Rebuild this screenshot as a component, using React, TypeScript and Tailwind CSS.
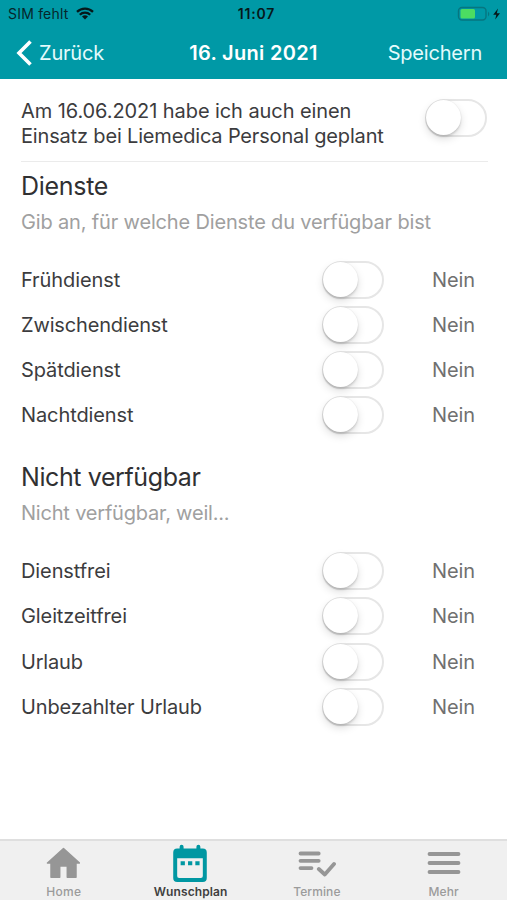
import type { ReactNode } from "react";

function Toggle() {
  return (
    <span className="flex h-[38px] w-[62px] shrink-0 rounded-full border-2 border-[#e6e6e6] bg-white">
      <span className="-mt-px -ml-px h-[35px] w-[35px] rounded-full bg-white shadow-[0_4px_8px_rgba(0,0,0,0.13),0_2px_2px_rgba(0,0,0,0.12),0_0_1px_rgba(0,0,0,0.12)]" />
    </span>
  );
}

function ShiftRow({ label, spacing }: { label: string; spacing: string }) {
  return (
    <div className="flex h-[45.2px] items-center pr-[32px] pl-[21px]">
      <span className={`flex-1 text-[20px] leading-[24px] text-[#3c3c3e] ${spacing}`}>{label}</span>
      <Toggle />
      <span className="w-[91px] text-right text-[20px] leading-[24px] tracking-[-0.1px] text-[#707070]">Nein</span>
    </div>
  );
}

function Tab({ label, active, className, children }: { label: string; active?: boolean; className: string; children: ReactNode }) {
  return (
    <div className="flex flex-1 flex-col items-center">
      <div className="flex h-[44px] items-center justify-center">{children}</div>
      <span className={`text-[12px] leading-[14px] whitespace-nowrap ${active ? "font-semibold text-[#3f3f3f]" : "font-medium text-[#9b9b9b]"} ${className}`}>{label}</span>
    </div>
  );
}

const shifts = [
  { label: "Frühdienst", spacing: "tracking-[-0.1px]" },
  { label: "Zwischendienst", spacing: "tracking-[-0.15px]" },
  { label: "Spätdienst", spacing: "tracking-[-0.1px]" },
  { label: "Nachtdienst", spacing: "tracking-[-0.1px]" },
];

const absences = [
  { label: "Dienstfrei", spacing: "tracking-[-0.1px]" },
  { label: "Gleitzeitfrei", spacing: "tracking-[-0.1px]" },
  { label: "Urlaub", spacing: "tracking-[-0.2px]" },
  { label: "Unbezahlter Urlaub", spacing: "tracking-[-0.15px]" },
];

export default function App() {
  return (
    <div className="flex h-[900px] w-[507px] flex-col overflow-hidden bg-white font-['Inter',sans-serif]">
      <header className="h-[79px] shrink-0 bg-[#0099a6]">
        <div className="grid h-[27px] grid-cols-[1fr_auto_1fr] items-center pr-[6px] pl-[8px] text-[14px] leading-[18px] text-[#06262a]">
          <div className="flex items-center gap-[7px]">
            <span className="tracking-[0.2px] whitespace-nowrap">SIM fehlt</span>
            <svg width="18" height="13" viewBox="0 0 18 13" fill="none" stroke="#06181a" strokeWidth="2.3">
              <path d="M1 4.9a11.4 11.4 0 0 1 16 0" />
              <path d="M3.8 7.8a7.4 7.4 0 0 1 10.4 0" />
              <path d="M9 12.6 6 9.6a4.3 4.3 0 0 1 6 0Z" fill="#06181a" stroke="none" />
            </svg>
          </div>
          <span className="pl-[4px] text-center font-semibold tracking-[0.8px] text-[#06181a]">11:07</span>
          <svg className="justify-self-end" width="44" height="16" viewBox="0 0 44 16">
            <rect x="1.5" y="1.5" width="27.5" height="12.5" rx="3.5" fill="none" stroke="#067680" strokeWidth="1.4" />
            <rect x="3.5" y="3" width="14.5" height="9.5" rx="1.5" fill="#4cdc62" />
            <path d="M31 5.5q2.6 2.5 0 5Z" fill="#067680" />
            <path d="M41 2.5 36.2 8.8h3.1L38.2 13.5 43 7.2h-3.2Z" fill="#06181a" />
          </svg>
        </div>
        <div className="grid h-[51px] grid-cols-[1fr_auto_1fr] items-center px-[16px] text-[20px] leading-[24px] text-[#e4fbfc]">
          <div className="flex items-center gap-[7px]">
            <svg width="16" height="26" viewBox="0 0 16 26" fill="none" stroke="white" strokeWidth="3.6">
              <path d="M14.5 1.5 3 13l11.5 11.5" />
            </svg>
            <span className="tracking-[-0.2px]">Zurück</span>
          </div>
          <span className="font-semibold tracking-[0.3px] text-white">16. Juni 2021</span>
          <span className="pr-[9px] text-right tracking-[-0.2px]">Speichern</span>
        </div>
      </header>

      <main className="flex-1">
        <div className="mr-[19px] ml-[21px] flex h-[83px] justify-between border-b border-[#ebebeb]">
          <p className="pt-[20px] text-[20px] leading-[25px] whitespace-nowrap text-[#3c3c3e]">
            <span className="tracking-[-0.08px]">Am 16.06.2021 habe ich auch einen</span>
            <br />
            <span className="tracking-[-0.17px]">Einsatz bei Liemedica Personal geplant</span>
          </p>
          <div className="pt-[20px] pr-px">
            <Toggle />
          </div>
        </div>

        <section>
          <h2 className="mt-[9px] px-[21px] text-[25px] leading-[30px] tracking-[-0.3px] text-[#303032]">Dienste</h2>
          <p className="mt-[9px] mb-[23px] px-[21px] text-[20px] leading-[24px] tracking-[-0.16px] text-[#a0a0a0]">Gib an, für welche Dienste du verfügbar bist</p>
          {shifts.map((s) => <ShiftRow key={s.label} {...s} />)}
        </section>

        <section>
          <h2 className="mt-[24.2px] px-[21px] text-[25px] leading-[30px] tracking-[-0.4px] text-[#303032]">Nicht verfügbar</h2>
          <p className="mt-[9px] mb-[23.6px] px-[21px] text-[20px] leading-[24px] tracking-[-0.2px] text-[#a0a0a0]">Nicht verfügbar, weil...</p>
          {absences.map((s) => <ShiftRow key={s.label} {...s} />)}
        </section>
      </main>

      <nav className="flex h-[61px] shrink-0 border-t-2 border-[#dfdfdf] bg-[#f0f0f0]">
        <Tab label="Home" className="pl-px tracking-[0.3px]">
          <svg width="34" height="32" viewBox="-0.5 0 34 32" fill="#969696" stroke="#969696" strokeWidth="1.5" strokeLinejoin="round">
            <path d="M17 1.5 1 16h3.5v14.2h8.7V19h7.6v11.2h8.7V16H33Z" />
          </svg>
        </Tab>
        <Tab label="Wunschplan" active className="pl-px tracking-[0.1px]">
          <svg width="34" height="38" viewBox="0 -0.5 34 38.5">
            <path fill="#0097a2" fillRule="evenodd" d="M4 4h2.5V2.3a1.7 1.7 0 0 1 4 0V4h13V2.3a1.7 1.7 0 0 1 4 0V4H30a4 4 0 0 1 4 4v26a4 4 0 0 1-4 4H4a4 4 0 0 1-4-4V8a4 4 0 0 1 4-4ZM4 14v18a2 2 0 0 0 2 2h22a2 2 0 0 0 2-2V14Z" />
            <path fill="#0097a2" d="M7.5 17h4.3v4H7.5ZM15 17h4.3v4H15ZM22.4 17h4.3v4h-4.3Z" />
          </svg>
        </Tab>
        <Tab label="Termine" className="tracking-[0.1px]">
          <svg width="38" height="27" viewBox="0 -0.5 38 27" fill="none" stroke="#969696" strokeWidth="3.8" strokeLinecap="round" strokeLinejoin="round">
            <path d="M2.5 3h18.2M2.5 10.3h18.2M2.5 17.6h11M20.8 18.5l6 5.5L36 13.5" />
          </svg>
        </Tab>
        <Tab label="Mehr" className="tracking-[0.1px]">
          <svg width="34" height="24" viewBox="0 0 34 24" fill="none" stroke="#969696" strokeWidth="3.8" strokeLinecap="round">
            <path d="M2.5 3h29M2.5 12h29M2.5 21h29" />
          </svg>
        </Tab>
      </nav>
    </div>
  );
}
